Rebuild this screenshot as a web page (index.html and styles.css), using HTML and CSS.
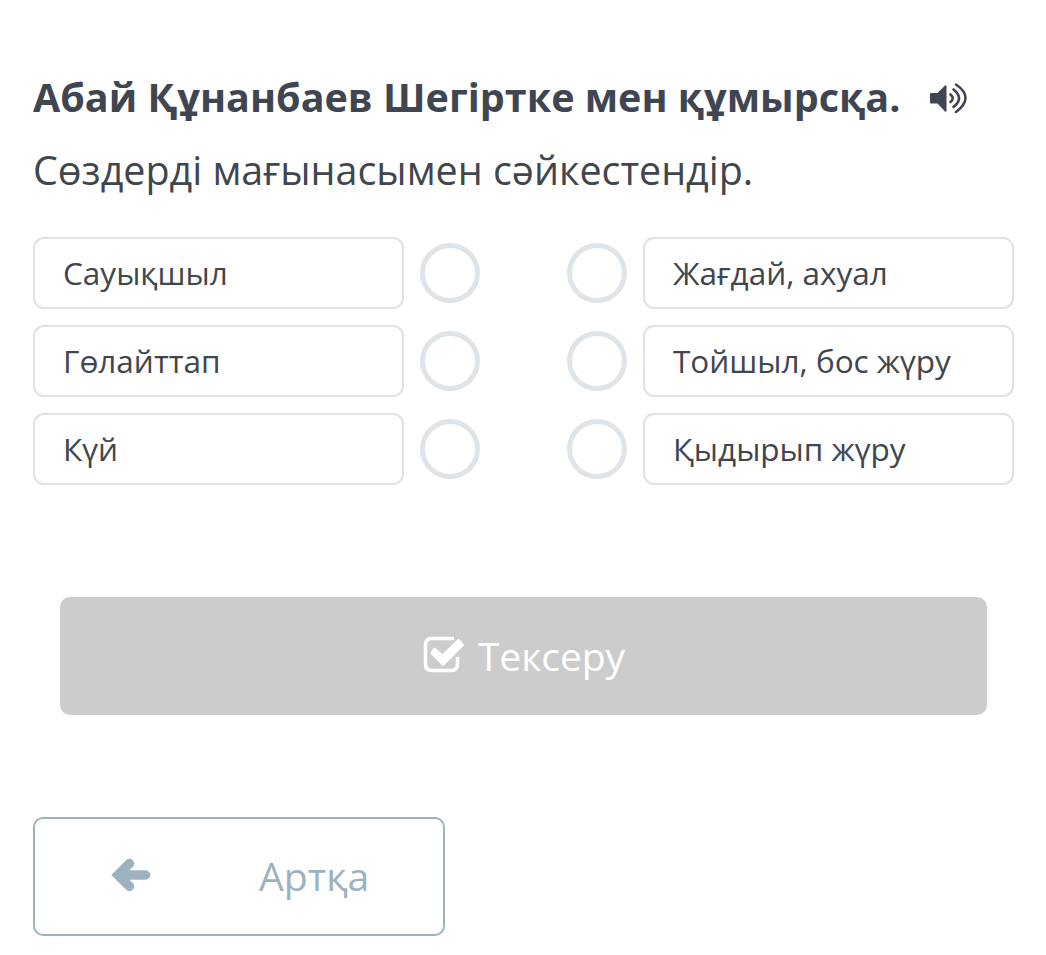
FILE: index.html
```html
<!DOCTYPE html>
<html lang="kk">
<head>
<meta charset="utf-8">
<title>Сәйкестендіру</title>
<link rel="stylesheet" href="styles.css">
</head>
<body>
<h1>Абай Құнанбаев Шегіртке мен құмырсқа.
<svg class="sound" viewBox="0 0 38 34"><path d="M1 12h6.500L15 4.500q1.500-.5 1.500.8v24.400q0 1.300-1.500.800L7.500 22.500H1q-1 0-1-1V13q0-1 1-1z"/><path class="wave" d="M20.500 13.500q4.500 3.700 0 7.500M23.500 8.500q11 8.500 0 17.500M26 3.500q19 13 0 27.500"/></svg>
</h1>
<p class="task">Сөздерді мағынасымен сәйкестендір.</p>
<div class="match">
<div class="row"><div class="word">Сауықшыл</div><span class="dot"></span><span class="dot right"></span><div class="word">Жағдай, ахуал</div></div>
<div class="row"><div class="word">Гөлайттап</div><span class="dot"></span><span class="dot right"></span><div class="word">Тойшыл, бос жүру</div></div>
<div class="row"><div class="word">Күй</div><span class="dot"></span><span class="dot right"></span><div class="word">Қыдырып жүру</div></div>
</div>
<button class="check" disabled>
<svg class="tick" viewBox="0 0 44 38"><path class="box" d="M32 3.500H10Q3.500 3.500 3.500 10V29Q3.500 35.500 10 35.500H29Q35.500 35.500 35.500 29V22"/><path class="mark" d="M12.500 13.500L20.500 20.500L36.500 5L41 10L21 30L9.500 18z"/></svg>
<span>Тексеру</span>
</button>
<button class="back">
<svg class="arrow" viewBox="0 0 40 34"><path d="M34.500 17H8M18.500 5.500L7 17l11.500 11.500"/></svg>
<span>Артқа</span>
</button>
</body>
</html>
```
FILE: styles.css
```css
* {box-sizing: border-box;}
body {margin: 0;padding: 69px 32px 0 33px;font-family: "Open Sans", "Noto Sans", sans-serif;color: #41464d;background-color: #fff;}
h1 {margin: 0;height: 56px;line-height: 56px;font-size: 39.5px;font-weight: bold;color: #3f4652;white-space: nowrap;display: flex;align-items: center;}
.sound {width: 38px;height: 34px;margin: 2px 0 0 30px;fill: #3f4652;}
.wave {fill: none;stroke: #3f4652;stroke-width: 2.6;stroke-linecap: round;}
.task {margin: 17px 0 39px;height: 56px;line-height: 56px;font-size: 39.45px;white-space: nowrap;}
.match {display: flex;flex-direction: column;gap: 16px;}
.row {display: flex;align-items: center;}
.word {width: 371px;height: 72px;line-height: 67px;padding-left: 28px;border: 2px solid #dfe2e5;border-radius: 11px;font-size: 31.5px;white-space: nowrap;}
.dot {width: 60px;height: 60px;margin-left: 16px;border: 5px solid #dfe4e8;border-radius: 50%;}
.dot.right {margin: 0 16px 0 87px;}
button {display: flex;align-items: center;font-family: inherit;font-size: 39.2px;border-radius: 10px;}
.check {width: 927px;height: 118px;margin: 112px 0 0 27px;padding: 0 0 2px 0;justify-content: center;border: 0;color: #fff;background-color: #ccc;}
.tick {width: 44px;height: 38px;margin: 0 12px 3px 0;fill: none;stroke: #fff;}
.box {stroke-width: 3.6;}
.mark {fill: #fff;stroke-width: 2;stroke-linejoin: round;}
.check span {letter-spacing: -.15px;}
.back {width: 412px;height: 119px;margin-top: 102px;padding: 0 0 2px 76px;border: 2px solid #9db2bf;color: #9db2bf;background-color: #fff;}
.arrow {width: 40px;height: 34px;margin: 0 108px 1px 0;fill: none;stroke: #9db2bf;stroke-width: 9.5;stroke-linecap: round;}
```
